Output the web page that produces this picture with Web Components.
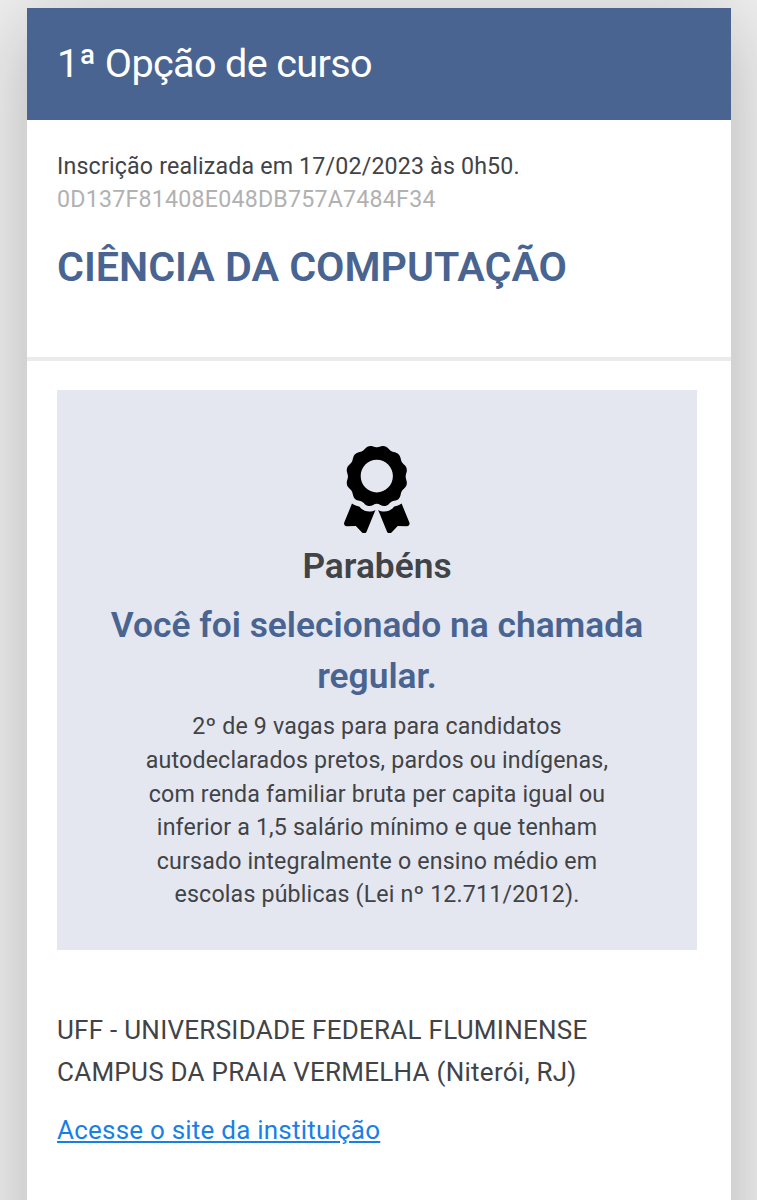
<!DOCTYPE html>
<html lang="pt-BR">
<head>
<meta charset="utf-8">
<title>1ª Opção de curso</title>
<style>
html,body{margin:0;height:100%;overflow:hidden}
body{background:#eee;font-family:Roboto,"Liberation Sans",sans-serif;color:#414346}
</style>
</head>
<body>
<course-card>
  <span slot="title">1ª Opção de curso</span>
  <course-summary slot="summary" date="Inscrição realizada em 17/02/2023 às 0h50." code="0D137F81408E048DB757A7484F34">CIÊNCIA DA COMPUTAÇÃO</course-summary>
  <result-panel>
    <span slot="greeting">Parabéns</span>
    <span slot="headline">Você foi selecionado na chamada<br>regular.</span>
    <span>2º de 9 vagas para para candidatos<br>autodeclarados pretos, pardos ou indígenas,<br>com renda familiar bruta per capita igual ou<br>inferior a 1,5 salário mínimo e que tenham<br>cursado integralmente o ensino médio em<br>escolas públicas (Lei nº 12.711/2012).</span>
  </result-panel>
  <institution-info>
    <span>UFF - UNIVERSIDADE FEDERAL FLUMINENSE<br>CAMPUS DA PRAIA VERMELHA (Niterói, RJ)</span>
    <span slot="link">Acesse o site da instituição</span>
  </institution-info>
</course-card>
<script>
const define = (name, html) => customElements.define(name, class extends HTMLElement {
  constructor() {
    super();
    this.attachShadow({mode: 'open'}).innerHTML = html;
  }
  connectedCallback() {
    this.shadowRoot.querySelectorAll('[data-attr]').forEach(n => {
      n.textContent = this.getAttribute(n.dataset.attr);
    });
  }
});

define('award-icon', `<style>:host{display:block;width:65.6px;height:87.4px}svg{display:block;width:100%;height:100%}</style>
<svg viewBox="0 0 384 512" fill="#000"><path d="M97.12 362.63c-8.69-8.69-4.16-6.24-25.12-11.85-9.51-2.55-17.87-7.45-25.43-13.32L1.2 448.7c-4.39 10.77 3.81 22.47 15.43 22.03l52.69-2.01L105.56 507c8 8.44 22.04 5.81 26.43-4.96l52.05-127.62c-10.84 6.04-22.87 9.58-35.31 9.58-19.5 0-37.82-7.59-51.61-21.37zM382.8 448.7l-45.37-111.24c-7.56 5.88-15.92 10.77-25.43 13.32-21.07 5.64-16.45 3.18-25.12 11.85-13.79 13.78-32.12 21.37-51.62 21.37-12.44 0-24.47-3.55-35.31-9.58L252 502.04c4.39 10.77 18.44 13.4 26.43 4.96l36.25-38.28 52.69 2.01c11.62.44 19.82-11.27 15.43-22.03zM263 340c15.28-15.55 17.03-14.21 38.79-20.14 13.89-3.79 24.75-14.84 28.47-28.98 7.48-28.4 5.54-24.97 25.95-45.75 10.17-10.35 14.14-25.44 10.42-39.58-7.47-28.38-7.48-24.42 0-52.83 3.72-14.14-.25-29.23-10.42-39.58-20.41-20.78-18.47-17.36-25.95-45.75-3.72-14.14-14.58-25.19-28.47-28.98-27.88-7.61-24.52-5.62-44.95-26.41-10.17-10.35-25-14.4-38.89-10.61-27.87 7.6-23.98 7.61-51.9 0-13.89-3.79-28.72.25-38.89 10.61-20.41 20.78-17.05 18.8-44.94 26.41-13.89 3.79-24.75 14.84-28.47 28.98-7.47 28.39-5.54 24.97-25.95 45.75-10.17 10.35-14.15 25.44-10.42 39.58 7.47 28.36 7.48 24.4 0 52.82-3.72 14.14.25 29.23 10.42 39.59 20.41 20.78 18.47 17.35 25.95 45.75 3.72 14.14 14.58 25.19 28.47 28.98C104.6 325.96 106.27 325 121 340c13.23 13.47 33.84 15.88 49.74 5.82a39.676 39.676 0 0 1 42.53 0c15.89 10.06 36.5 7.65 49.73-5.82zM97.66 175.96c0-53.03 42.24-96.02 94.34-96.02s94.34 42.99 94.34 96.02-42.24 96.02-94.34 96.02-94.34-42.98-94.34-96.02z"/></svg>`);

define('course-card', `<style>
:host{display:block;box-sizing:border-box;height:1200px;padding:8px 26px 0 27px;overflow:hidden}
article{background:#fff;height:1400px;box-shadow:0 16px 76px rgba(0,0,0,.24)}
header{height:112.4px;box-sizing:border-box;background:#496491;color:#fff;padding:32px 30px 0;font-size:39.6px;line-height:48px;letter-spacing:-.65px}
.summary{height:236.6px;border-bottom:4px solid #ebebeb}
.body{padding:29px 34px 0 30px}
</style>
<article><header><slot name="title"></slot></header><div class="summary"><slot name="summary"></slot></div><div class="body"><slot></slot></div></article>`);

define('course-summary', `<style>
:host{display:block;padding:29.3px 30px 0}
p{margin:0;font-size:23.2px;line-height:33.6px;letter-spacing:.17px}
.code{color:#b1b1b1;letter-spacing:.22px}
h2{margin:24.7px 0 0;font-size:41.2px;line-height:50px;font-weight:600;color:#496491}
</style>
<p data-attr="date"></p><p class="code" data-attr="code"></p><h2><slot></slot></h2>`);

define('result-panel', `<style>
:host{display:flex;flex-direction:column;align-items:center;box-sizing:border-box;height:560.5px;padding-top:56px;background:#e4e7f0;text-align:center}
h3,h4,p{margin:0}
h3{margin-top:8px;font-size:35.3px;line-height:50px;font-weight:600}
h4{margin-top:9px;font-size:35.35px;line-height:50.5px;font-weight:600;color:#496491}
p{margin-top:9px;font-size:23.2px;line-height:33.6px;letter-spacing:.17px;white-space:nowrap}
</style>
<award-icon></award-icon><h3><slot name="greeting"></slot></h3><h4><slot name="headline"></slot></h4><p><slot></slot></p>`);

define('institution-info', `<style>
:host{display:block;padding-top:58.8px;white-space:nowrap}
p{margin:0;font-size:26px;line-height:42px;letter-spacing:.26px}
a{display:table;margin-top:16px;font-size:26px;line-height:42px;letter-spacing:.22px;color:#197fe6;text-decoration:underline}
</style>
<p><slot></slot></p><a href="#"><slot name="link"></slot></a>`);
</script>
</body>
</html>
